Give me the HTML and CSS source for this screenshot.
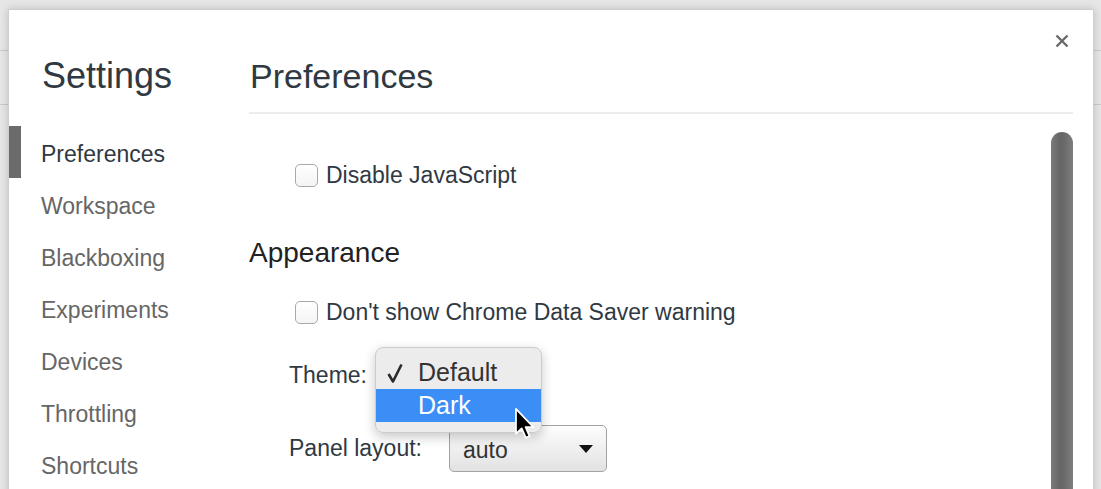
FILE: index.html
```html
<!DOCTYPE html>
<html lang="en">
<head>
    <meta charset="UTF-8">
    <meta name="viewport" content="width=device-width, initial-scale=1.0">
    <title>Settings</title>
    <link rel="stylesheet" href="styles.css">
</head>
<body>
    <div class="dialog">
        <!-- Close button -->
        <span class="close">
            <svg width="14" height="14" viewBox="0 0 14 14"><path d="M1.5 1.5 L12.5 12.5 M12.5 1.5 L1.5 12.5" stroke="#6a6a6a" stroke-width="2.4" fill="none"/></svg>
        </span>

        <div class="sidebar">
            <h1 class="sidebar-title">Settings</h1>
            <ul class="nav">
                <li class="nav-item selected">Preferences</li>
                <li class="nav-item">Workspace</li>
                <li class="nav-item">Blackboxing</li>
                <li class="nav-item">Experiments</li>
                <li class="nav-item">Devices</li>
                <li class="nav-item">Throttling</li>
                <li class="nav-item">Shortcuts</li>
            </ul>
        </div>

        <div class="main">
            <h2 class="main-title">Preferences</h2>
            <div class="scroll-area">
                <div class="settings">
                    <label class="check-row first">
                        <span class="checkbox"></span>
                        <span>Disable JavaScript</span>
                    </label>

                    <h3 class="section-title">Appearance</h3>

                    <label class="check-row">
                        <span class="checkbox"></span>
                        <span>Don't show Chrome Data Saver warning</span>
                    </label>

                    <div class="field-row theme-row">
                        <span class="field-label">Theme:</span>
                        <!-- Open select menu -->
                        <div class="menu">
                            <div class="menu-item"><span class="check"><svg width="16" height="20" viewBox="0 0 16 20"><path d="M1.5 11 L6 18.5 L14.5 1.5" stroke="#2a2a2a" stroke-width="2.6" fill="none" stroke-linejoin="round"/></svg></span>Default</div>
                            <div class="menu-item active"><span class="check"></span>Dark</div>
                            <svg class="cursor" width="23" height="33" viewBox="0 0 18 26"><path d="M1.5 1.5 V21 L6 16.8 L9.2 24.2 L12.2 22.9 L9.1 15.8 H15.2 Z" fill="#000" stroke="#fff" stroke-width="1.4" stroke-linejoin="round"/></svg>
                        </div>
                    </div>

                    <div class="field-row panel-row">
                        <span class="field-label wide">Panel layout:</span>
                        <div class="select">
                            <span>auto</span>
                            <span class="arrow"></span>
                        </div>
                    </div>
                </div>
                <div class="scrollbar"></div>
            </div>
        </div>
    </div>
</body>
</html>
```

FILE: styles.css
```css
body {
    margin: 0;
    overflow: hidden;
    height: 489px;
    font-family: "Liberation Sans", Arial, sans-serif;
    background-color: #e6e6e6;
    background-image:
        linear-gradient(#cacaca, #cacaca),
        linear-gradient(#cacaca, #cacaca);
    background-size: 100% 1px, 100% 1px;
    background-position: 0 50px, 0 104px;
    background-repeat: no-repeat;
}

.dialog {
    position: relative;
    display: flex;
    width: 1084px;
    height: 540px;
    margin: 9px 0 0 8px;
    background: #fff;
    border: 1px solid #cfcfcf;
    box-shadow: 0 0 8px rgba(0, 0, 0, 0.18);
}

.close {
    position: absolute;
    top: 24px;
    right: 24px;
    width: 14px;
    height: 14px;
    cursor: pointer;
}

.close svg {
    display: block;
}

/* Sidebar */
.sidebar {
    width: 240px;
    padding-top: 46px;
}

.sidebar-title {
    margin: 0 0 30px 33px;
    font-size: 36px;
    font-weight: normal;
    line-height: 40px;
    color: #303942;
}

.nav {
    list-style: none;
    margin: 0;
    padding: 0;
}

.nav-item {
    height: 52px;
    line-height: 57px;
    padding-left: 20px;
    border-left: 12px solid transparent;
    font-size: 23px;
    color: #666;
}

.nav-item.selected {
    border-left-color: #6b6b6b;
    color: #303942;
}

/* Main column */
.main {
    width: 824px;
    padding-top: 46px;
}

.main-title {
    margin: 0;
    padding: 0 0 16px 1px;
    font-size: 34px;
    font-weight: normal;
    line-height: 40px;
    color: #303942;
    border-bottom: 2px solid #ececec;
}

.scroll-area {
    display: flex;
}

.settings {
    flex: 1;
}

.check-row {
    display: flex;
    align-items: center;
    height: 30px;
    margin: 34px 0 0 46px;
    font-size: 23px;
    color: #303942;
}

.check-row.first {
    margin-top: 46px;
}

.checkbox {
    width: 21px;
    height: 21px;
    margin-right: 8px;
    border: 1px solid #a9a9a9;
    border-radius: 5px;
    background: linear-gradient(#fff, #f4f4f4);
}

.section-title {
    margin: 47px 0 28px 0;
    font-size: 28px;
    font-weight: normal;
    line-height: 32px;
    color: #222;
}

.section-title + .check-row {
    margin-top: 0;
}

.field-row {
    display: flex;
    align-items: center;
    margin-left: 40px;
    font-size: 23px;
    color: #303942;
}

.theme-row {
    position: relative;
    height: 30px;
    margin-top: 33px;
}

.panel-row {
    height: 47px;
    margin-top: 35px;
}

.field-label.wide {
    width: 160px;
}

.select {
    display: flex;
    align-items: center;
    justify-content: space-between;
    box-sizing: border-box;
    width: 158px;
    height: 47px;
    padding: 4px 13px 0 13px;
    border: 1px solid #a3a3a3;
    border-radius: 5px;
    background: linear-gradient(#fdfdfd, #e2e2e2);
    color: #333;
}

.arrow {
    width: 0;
    height: 0;
    margin-bottom: 4px;
    border-left: 7px solid transparent;
    border-right: 7px solid transparent;
    border-top: 8px solid #111;
}

/* Open popup menu */
.menu {
    position: absolute;
    left: 86px;
    top: -13px;
    width: 165px;
    padding: 8px 0 10px 0;
    background: rgba(236, 236, 236, 0.98);
    border: 1px solid #cbcbcb;
    border-radius: 8px;
    box-shadow: 0 4px 12px rgba(0, 0, 0, 0.22);
    z-index: 10;
}

.menu-item {
    display: flex;
    align-items: center;
    height: 33px;
    padding-left: 11px;
    font-size: 25px;
    color: #333;
}

.menu-item.active {
    background: #3b8ef6;
    color: #fff;
}

.check {
    display: flex;
    width: 31px;
}

.check svg {
    display: block;
}

.cursor {
    position: absolute;
    left: 138px;
    top: 59px;
}

/* Scrollbar */
.scrollbar {
    width: 22px;
    height: 400px;
    margin-top: 18px;
    border-radius: 11px 11px 0 0;
    background: linear-gradient(to right, #7b7b7b, #666 40%, #6a6a6a 60%, #7e7e7e);
}
```
